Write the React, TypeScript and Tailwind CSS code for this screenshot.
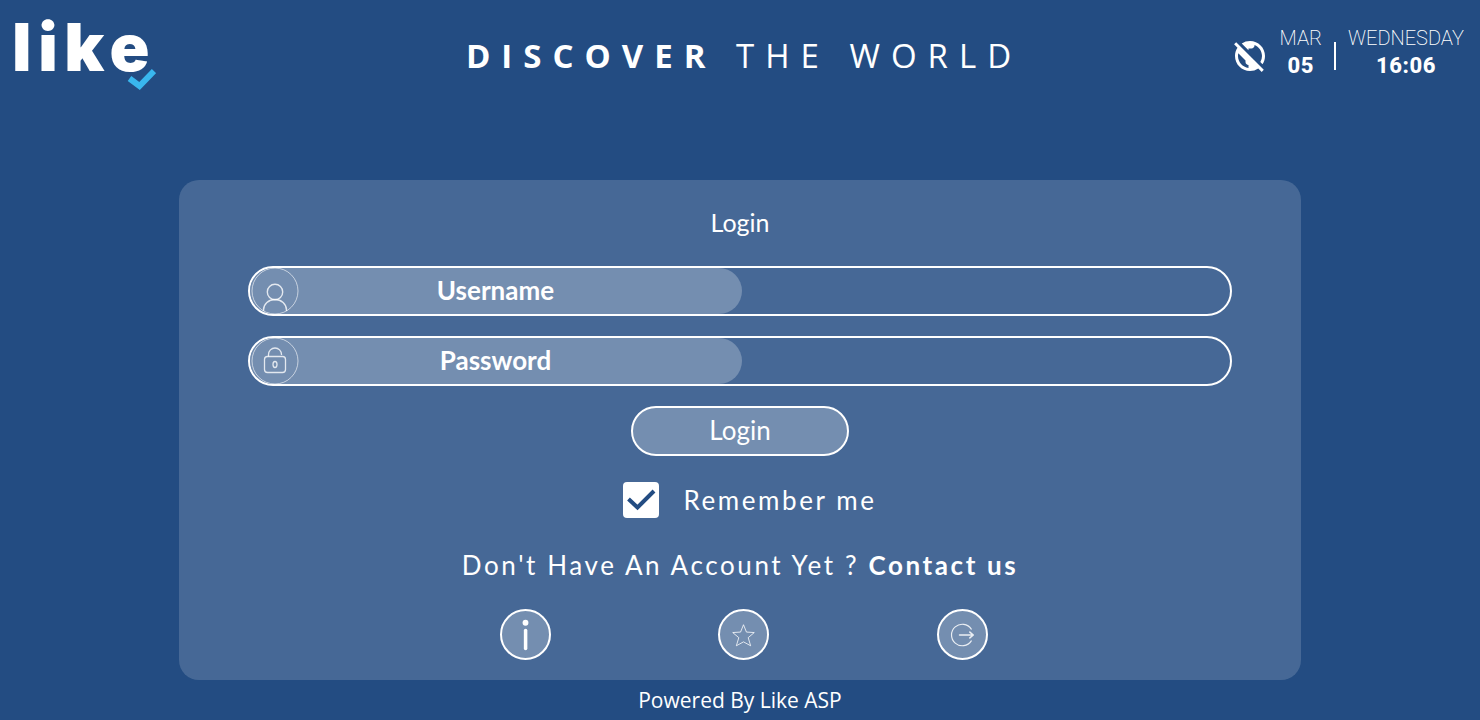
import React, { useState } from "react";
import { MdPublicOff } from "react-icons/md";

const Logo: React.FC = () => (
  <a href="#" className="relative -ml-1 block h-20 w-36 text-white">
    <span className="font-['Inter',sans-serif] text-[66px] font-black leading-[62px] tracking-widest">
      like
    </span>
    <svg
      className="absolute right-0 bottom-1 h-6 w-8 text-[#39b7ee]"
      viewBox="0 0 32 24"
      fill="none"
      stroke="currentColor"
      strokeWidth={6}
    >
      <path d="M5.5 10.5 L15.5 18 L30 3" />
    </svg>
  </a>
);

const UserIcon: React.FC = () => (
  <svg
    className="h-12 w-12 shrink-0"
    viewBox="0 0 48 48"
    fill="none"
    stroke="white"
    strokeOpacity={0.8}
  >
    <circle cx="24" cy="24" r="23" strokeOpacity={0.6} />
    <circle cx="24" cy="25" r="7.7" strokeWidth={1.4} />
    <path d="M12.5 44 V43 A11.5 10.5 0 0 1 35.5 43 V44" strokeWidth={1.4} />
  </svg>
);

const LockIcon: React.FC = () => (
  <svg
    className="h-12 w-12 shrink-0"
    viewBox="0 0 48 48"
    fill="none"
    stroke="white"
    strokeOpacity={0.8}
  >
    <circle cx="24" cy="24" r="23" strokeOpacity={0.6} />
    <rect x="13.5" y="19.5" width="21" height="16" rx="3" strokeWidth={1.3} />
    <path d="M17.5 19.5 V17.5 A6.5 6.5 0 0 1 30.5 17.5 V18" strokeWidth={1.3} />
    <ellipse cx="24" cy="27.5" rx="2" ry="3" strokeWidth={1.3} />
  </svg>
);

const InfoIcon: React.FC = () => (
  <svg className="h-12 w-12" viewBox="0 0 48 48" fill="white">
    <circle cx="24" cy="11.5" r="3" />
    <rect x="22.3" y="17.5" width="3.6" height="22" rx="1.8" />
  </svg>
);

const StarIcon: React.FC = () => (
  <svg
    className="h-12 w-12"
    viewBox="0 0 48 48"
    fill="none"
    stroke="white"
    strokeOpacity={0.8}
    strokeLinejoin="round"
  >
    <path d="M24 13.5 L27 21 L35 21.5 L28.8 26.7 L31.3 35 L24 31 L16.7 35 L19.2 26.7 L13 21.5 L21 21 Z" />
  </svg>
);

const ExitIcon: React.FC = () => (
  <svg
    className="h-12 w-12"
    viewBox="0 0 48 48"
    fill="none"
    stroke="white"
    strokeOpacity={0.85}
    strokeLinecap="round"
    strokeLinejoin="round"
  >
    <path d="M33 18 A11 11 0 1 0 33 30" strokeWidth={1.2} />
    <path d="M21 24 H34 M31.5 21 L35 24 L31.5 27" strokeWidth={1.6} />
  </svg>
);

type FieldProps = {
  id: string;
  label: string;
  type: string;
  icon: React.ReactNode;
  value: string;
  onChange: (value: string) => void;
};

const Field: React.FC<FieldProps> = ({
  id,
  label,
  type,
  icon,
  value,
  onChange,
}) => (
  <div className="flex h-[50px] w-full overflow-hidden rounded-full border-2 border-white">
    <label
      htmlFor={id}
      className="flex w-[calc(50%+2px)] items-center rounded-full bg-white/25 pl-px text-[26px] font-bold"
    >
      {icon}
      <span className="flex-1 pr-[50px] pb-0.5 text-center">{label}</span>
    </label>
    <input
      id={id}
      type={type}
      value={value}
      onChange={(e) => onChange(e.target.value)}
      className="min-w-0 flex-1 bg-transparent px-6 text-center text-2xl outline-none"
    />
  </div>
);

const actions = [
  { name: "Information", icon: <InfoIcon /> },
  { name: "Favourites", icon: <StarIcon /> },
  { name: "Exit", icon: <ExitIcon /> },
];

const App: React.FC = () => {
  const [username, setUsername] = useState<string>("");
  const [password, setPassword] = useState<string>("");
  const [remember, setRemember] = useState<boolean>(true);

  return (
    <div className="flex min-h-screen flex-col bg-[#234c82] font-['Lato',sans-serif] text-white">
      <header className="grid h-[112px] grid-cols-[1fr_auto_1fr] items-center px-4">
        <Logo />
        <h1 className="pl-2 font-['Open_Sans',sans-serif] text-[33px] tracking-[11px]">
          <b>DISCOVER</b> THE WORLD
        </h1>
        <div className="flex items-center justify-end gap-3 font-['Roboto',sans-serif] leading-7">
          <MdPublicOff className="h-9 w-9" />
          <div className="pb-2 text-center">
            <div className="text-xl leading-7 font-extralight">MAR</div>
            <div className="text-[22px] font-extrabold tracking-wide">05</div>
          </div>
          <div className="h-7 w-0.5 bg-white" />
          <div className="pb-2 text-center">
            <div className="text-xl leading-7 font-extralight">WEDNESDAY</div>
            <div className="text-[22px] font-extrabold tracking-wide">
              16:06
            </div>
          </div>
        </div>
      </header>

      <main className="mx-[179px] mt-[68px] rounded-[20px] bg-white/16 px-[69px]">
        <form
          onSubmit={(e) => e.preventDefault()}
          className="flex flex-col items-center pt-6 pb-5"
        >
          <h2 className="mb-[26px] text-[25px] leading-9">Login</h2>
          <div className="flex w-full flex-col items-center gap-5">
            <Field
              id="username"
              label="Username"
              type="text"
              icon={<UserIcon />}
              value={username}
              onChange={setUsername}
            />
            <Field
              id="password"
              label="Password"
              type="password"
              icon={<LockIcon />}
              value={password}
              onChange={setPassword}
            />
            <button
              type="submit"
              className="h-[50px] w-[218px] rounded-full border-2 border-white bg-white/25 pb-0.5 text-[26px]"
            >
              Login
            </button>
          </div>
          <label className="mt-6 ml-5 flex items-center gap-6 text-[26px] leading-10 tracking-widest">
            <span className="grid h-9 w-9 place-items-center">
              <input
                type="checkbox"
                checked={remember}
                onChange={(e) => setRemember(e.target.checked)}
                className="peer col-start-1 row-start-1 h-9 w-9 appearance-none rounded bg-white"
              />
              <svg
                className="pointer-events-none invisible col-start-1 row-start-1 h-9 w-9 peer-checked:visible"
                viewBox="0 0 36 36"
                fill="none"
                stroke="#234c82"
                strokeWidth={4}
              >
                <path d="M5.5 17 L14.5 25.5 L31 9" />
              </svg>
            </span>
            Remember me
          </label>
          <p className="mt-[25px] text-[26px] leading-10 tracking-widest">
            Don't Have An Account Yet ?{" "}
            <a href="#" className="font-bold">
              Contact us
            </a>
          </p>
          <div className="mt-6 ml-2 flex w-2/3 justify-around">
            {actions.map((action) => (
              <button
                key={action.name}
                type="button"
                aria-label={action.name}
                className="flex h-[51px] w-[51px] items-center justify-center rounded-full border-2 border-white bg-white/25"
              >
                {action.icon}
              </button>
            ))}
          </div>
        </form>
      </main>

      <footer className="py-1 text-center font-['Open_Sans',sans-serif] text-[21px] leading-8">
        Powered By Like ASP
      </footer>
    </div>
  );
};

export default App;
